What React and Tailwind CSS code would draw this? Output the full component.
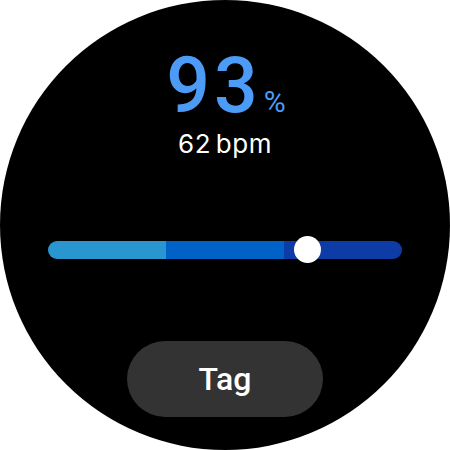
export default function App() {
  return (
    <div className="w-[450px] h-[450px] bg-white" style={{ fontFamily: 'Roboto, "Liberation Sans", sans-serif' }}>
      <div className="w-[450px] h-[450px] rounded-full bg-black flex flex-col items-center pt-[48px]">
        <div className="flex items-baseline text-[#4c9bf6] ml-[2px]">
          <span className="text-[77px] leading-none font-medium tracking-[4px]">93</span>
          <span className="text-[30px] leading-none ml-[2px]">%</span>
        </div>
        <div className="text-white text-[26px] leading-none mt-[6px] tracking-[0.5px] [word-spacing:-3px]" style={{ fontFamily: 'Inter, Roboto, sans-serif' }}>62 bpm</div>
        <div className="relative w-[355px] h-[18px] mt-[84px] flex rounded-full">
          <div className="flex-1 bg-[#2a96cf] rounded-l-full"></div>
          <div className="flex-1 bg-[#0062c7]"></div>
          <div className="flex-1 bg-[#0d3ca6] rounded-r-full"></div>
          <div className="absolute left-[246px] top-[-5px] w-[27px] h-[27px] rounded-full bg-white"></div>
        </div>
        <button className="mt-[82px] w-[196px] h-[76px] rounded-full bg-[#333333] text-white text-[32px] font-medium flex items-center justify-center">
          Tag
        </button>
      </div>
    </div>
  );
}
